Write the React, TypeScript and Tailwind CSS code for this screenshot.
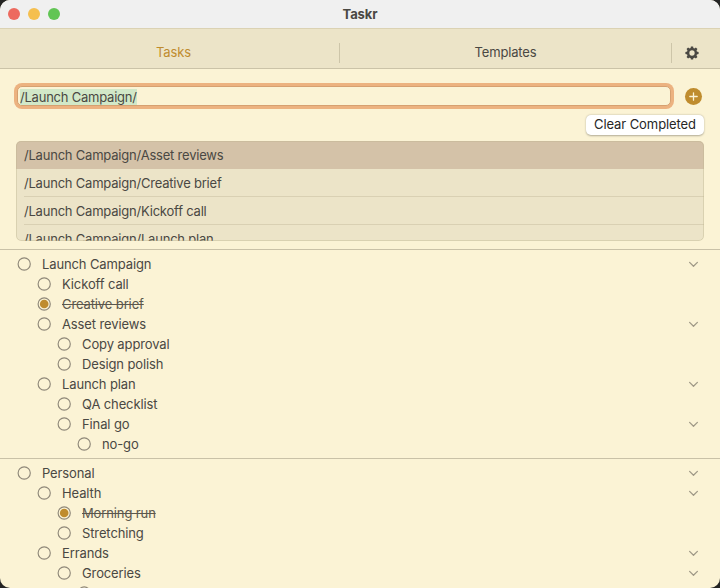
import React from "react";

type Task = { title: string; depth: number; done?: boolean; open?: boolean };

const launch: Task[] = [
  { title: "Launch Campaign", depth: 0, open: true },
  { title: "Kickoff call", depth: 1 },
  { title: "Creative brief", depth: 1, done: true },
  { title: "Asset reviews", depth: 1, open: true },
  { title: "Copy approval", depth: 2 },
  { title: "Design polish", depth: 2 },
  { title: "Launch plan", depth: 1, open: true },
  { title: "QA checklist", depth: 2 },
  { title: "Final go", depth: 2, open: true },
  { title: "no-go", depth: 3 },
];

const personal: Task[] = [
  { title: "Personal", depth: 0, open: true },
  { title: "Health", depth: 1, open: true },
  { title: "Morning run", depth: 2, done: true },
  { title: "Stretching", depth: 2 },
  { title: "Errands", depth: 1, open: true },
  { title: "Groceries", depth: 2, open: true },
  { title: "", depth: 3 },
];

const suggestions = ["Asset reviews", "Creative brief", "Kickoff call", "Launch plan"];
const indents = ["pl-[17px]", "pl-[37px]", "pl-[57px]", "pl-[77px]"];

function TaskRow({ task }: { task: Task }) {
  return (
    <div className={`flex h-5 items-center pr-5 ${indents[task.depth]}`}>
      <svg className="size-[14px] shrink-0" viewBox="0 0 14 14">
        <circle cx="7.2" cy="7" r="6.1" fill="none" stroke="#8f8879" strokeWidth="1.15" />
        {task.done && <circle cx="7.2" cy="7" r="4.3" fill="#bf8c2e" />}
      </svg>
      <span
        className={`ml-[11px] whitespace-nowrap leading-5 tracking-[-0.12px] ${
          task.done ? "text-[#5b574d] line-through decoration-1" : "text-[#4a4843]"
        }`}
      >
        {task.title}
      </span>
      {task.open && (
        <svg className="ml-auto h-[7px] w-[13px]" viewBox="0 0 13 7" fill="none" stroke="#a09987" strokeWidth="1.25" strokeLinecap="round" strokeLinejoin="round">
          <path d="M2.6 1.4 6.5 5.3 10.4 1.4" />
        </svg>
      )}
    </div>
  );
}

function Gear() {
  return (
    <svg className="size-[14px]" viewBox="-7 -7 14 14" fill="none" stroke="#4a4843">
      <circle r="3.9" strokeWidth="2.5" />
      {[0, 45, 90, 135, 180, 225, 270, 315].map((angle) => (
        <path key={angle} d="M-1.5 -4.6 L-1.1 -6.6 H1.1 L1.5 -4.6 Z" fill="#4a4843" stroke="none" transform={`rotate(${angle})`} />
      ))}
    </svg>
  );
}

export default function App() {
  return (
    <div className="h-[588px] w-[720px] overflow-hidden bg-[#242424] font-['Inter',sans-serif] text-[13px] text-[#4a4843]">
      <div className="flex h-full flex-col overflow-hidden rounded-[10px] bg-[#fbf3d5]">
        <header className="grid h-7 shrink-0 grid-cols-[1fr_auto_1fr] items-center bg-[#f0f0f0]">
          <div className="flex gap-2 pl-2">
            <span className="size-3 rounded-full bg-[#ed6a5f]" />
            <span className="size-3 rounded-full bg-[#f5bf4f]" />
            <span className="size-3 rounded-full bg-[#61c554]" />
          </div>
          <h1 className="text-[13px] leading-7 font-bold tracking-[-0.1px]">Taskr</h1>
        </header>

        <nav className="flex h-[41px] shrink-0 items-center border-y border-t-[#dbd2b3] border-b-[#cbc3a8] bg-[#ece4c8] pt-2 tracking-[-0.15px]">
          <button className="ml-2 w-[331px] text-[#bf8c2e]">Tasks</button>
          <span className="h-5 w-px bg-[#cdc5a9]" />
          <button className="w-[331px]">Templates</button>
          <span className="h-5 w-px bg-[#cdc5a9]" />
          <button className="flex w-10 justify-center"><Gear /></button>
        </nav>

        <section className="flex h-[180px] shrink-0 flex-col pt-[14px] pr-4 pl-[14px]">
          <div className="flex items-center">
            <div className="flex h-[26px] w-[660px] rounded-[8px] bg-[#ecb280] p-[3px]">
              <div className="flex grow items-center rounded-[5px] border border-[#d6a070] bg-[#fbf3d5] px-[2px] pt-px">
                <span className="bg-[#d2e8c8] leading-4 tracking-[-0.22px]">/Launch Campaign/</span>
              </div>
            </div>
            <button className="ml-[11px] flex size-[17px] items-center justify-center rounded-full bg-[#bf8c2e]">
              <svg className="size-[9px]" viewBox="0 0 9 9" stroke="#fbf3d5" strokeWidth="1.3" strokeLinecap="round">
                <path d="M4.5 .8v7.4M.8 4.5h7.4" />
              </svg>
            </button>
          </div>
          <button className="mt-[6px] flex h-5 w-[118px] shrink-0 items-center justify-center self-end rounded-[5px] bg-white tracking-[-0.08px] whitespace-nowrap text-[#262626] shadow-[0_0.5px_2px_rgba(0,0,0,0.3)]">
            Clear Completed
          </button>
          <div className="relative mt-[6px] ml-[2px] h-[100px] shrink-0 overflow-hidden rounded-[5px] bg-[#ece4c8] after:absolute after:inset-0 after:rounded-[5px] after:border after:border-[#bfb48e]/40">
            <ul className="tracking-[-0.21px]">
              {suggestions.map((name, i) => (
                <li key={name} className={`h-7 pl-2 ${i === 0 ? "bg-[#d4c2a8]" : ""}`}>
                  <div className={`h-7 border-b leading-[29px] ${i === 0 ? "border-transparent" : "border-[#d9d0b3]"}`}>
                    /Launch Campaign/{name}
                  </div>
                </li>
              ))}
            </ul>
          </div>
        </section>

        <main className="grow overflow-hidden">
          <section className="h-[209px] border-t border-[#c9c1a7] pt-1">
            {launch.map((task) => <TaskRow key={task.title} task={task} />)}
          </section>
          <section className="border-t border-[#c9c1a7] pt-1">
            {personal.map((task) => <TaskRow key={task.title} task={task} />)}
          </section>
        </main>
      </div>
    </div>
  );
}
